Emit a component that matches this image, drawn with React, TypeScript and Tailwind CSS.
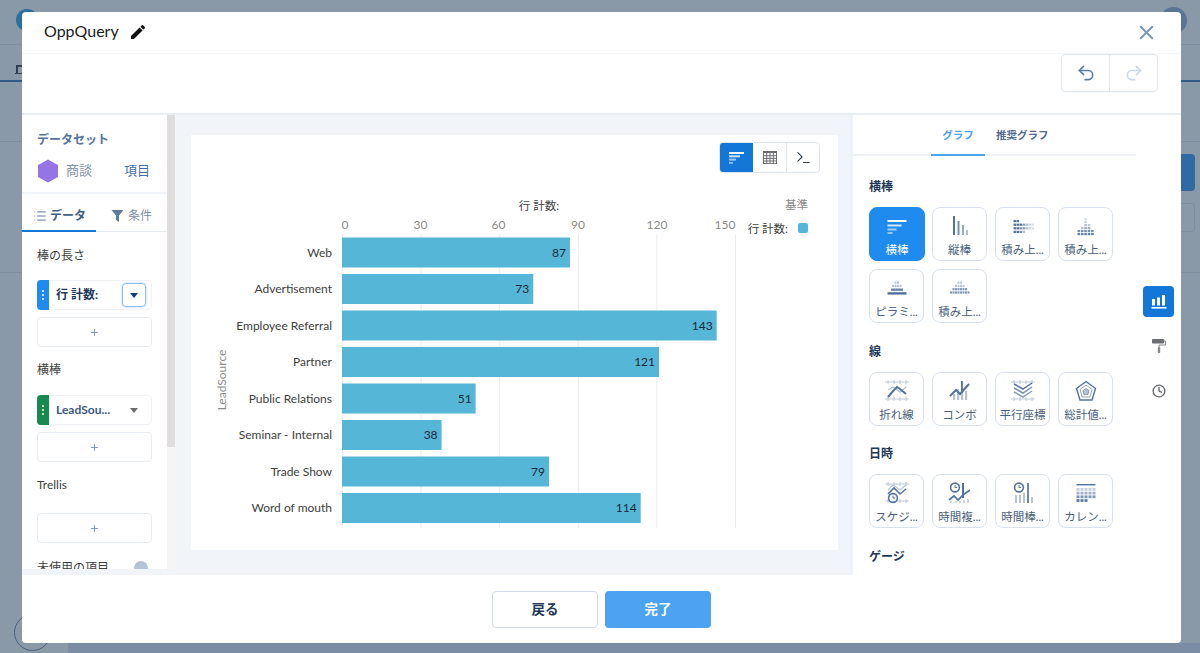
import React from "react";
import { Undo2, Redo2, X, List, Terminal, Clock, Plus } from "lucide-react";

const FONT = { fontFamily: "Lato, 'Noto Sans CJK JP', sans-serif" };
const D = "#54739b";
const L = "#b4c4d6";

const bars = [
  ["Web", 87], ["Advertisement", 73], ["Employee Referral", 143], ["Partner", 121],
  ["Public Relations", 51], ["Seminar - Internal", 38], ["Trade Show", 79], ["Word of mouth", 114],
] as const;

function Box({ children }: { children: React.ReactNode }) {
  return <svg width="24" height="24" viewBox="0 0 24 24" className="shrink-0">{children}</svg>;
}
function Plusses() {
  const out = [];
  for (const y of [3, 20]) for (let x = 3; x <= 21; x += 6)
    out.push(<path key={`${x}-${y}`} d={`M${x} ${y - 2}v4M${x - 3} ${y}h6`} stroke={L} strokeWidth="0.9" fill="none" />);
  return <>{out}</>;
}
function Cells({ rows, horizontal }: { rows: number[][]; horizontal: boolean }) {
  const out = [];
  for (let r = 0; r < rows.length; r++) for (let c = 0; c < rows[r].length; c++) {
    const x = horizontal ? 2.5 + c * 3 : 3.5 + r * 3.4;
    const y = horizontal ? 6 + r * 3.6 : 19 - c * 3;
    out.push(<rect key={`${r}-${c}`} x={x} y={y} width={2.6} height={2.2} fill={D} opacity={rows[r][c]} />);
  }
  return <>{out}</>;
}
function Pyramid({ pale }: { pale: boolean }) {
  const rows = pale ? [2, 4, 6, 8] : [2, 4];
  const out = [];
  rows.forEach((n, r) => {
    for (let i = 0; i < n; i++)
      out.push(<rect key={`${r}-${i}`} x={12 - n * 1.25 + i * 2.5} y={5.5 + r * 3.3} width="2" height="2.2" fill={D} opacity={pale ? (r > 1 ? 0.75 : 0.4) : 0.45} />);
  });
  return (
    <Box>
      {out}
      {!pale && <rect x="6" y="12.5" width="12" height="2.4" fill={D} opacity="0.85" />}
      {!pale && <rect x="2.5" y="16.2" width="19" height="2.4" fill={D} />}
    </Box>
  );
}
const ClockMini = ({ x, y }: { x: number; y: number }) => (
  <g fill="none" stroke={D} strokeWidth="1.6">
    <circle cx={x} cy={y} r="4.4" fill="#fff" />
    <path d={`M${x} ${y - 2.4}v2.4h2.2`} strokeWidth="1" />
  </g>
);
const icons: Record<string, React.ReactNode> = {
  hbar: (
    <Box>
      <rect x="2.5" y="6" width="19" height="2" fill="#fff" />
      <rect x="2.5" y="10.5" width="14" height="2" fill="#fff" opacity="0.8" />
      <rect x="2.5" y="14.5" width="9" height="2" fill="#fff" opacity="0.6" />
      <rect x="2.5" y="18" width="5" height="2" fill="#fff" opacity="0.5" />
    </Box>
  ),
  vbar: (
    <Box>
      <rect x="5" y="2" width="2" height="19" fill={D} />
      <rect x="9.5" y="7" width="2" height="14" fill={D} opacity="0.8" />
      <rect x="14" y="11" width="2" height="10" fill={D} opacity="0.6" />
      <rect x="18" y="16" width="2" height="5" fill={D} opacity="0.45" />
    </Box>
  ),
  stackH: <Box><Cells horizontal rows={[[1, 1], [1, 1, 1, 0.7, 0.45, 0.3, 0.2], [1, 1, 0.8, 0.7, 0.45, 0.3, 0.2], [1, 1, 0.8, 0.45]]} /></Box>,
  stackV: <Box><Cells horizontal={false} rows={[[0.9, 0.8], [0.9, 0.8, 0.45], [0.9, 0.8, 0.6, 0.45, 0.3, 0.2], [0.9, 0.8, 0.6, 0.4], [0.9, 0.8]]} /></Box>,
  pyr: <Pyramid pale={false} />,
  pyrD: <Pyramid pale />,
  line: (
    <Box>
      <Plusses />
      <path d="M3 11 L8 8 L15 13 L21 8" stroke={L} strokeWidth="1.4" fill="none" />
      <path d="M3 18 L9 11 L12 8 L15 10 L21 15" stroke={D} strokeWidth="2" fill="none" />
    </Box>
  ),
  combo: (
    <Box>
      <rect x="5" y="15" width="2.2" height="6" fill={L} />
      <rect x="9" y="10" width="2.2" height="11" fill={L} />
      <rect x="13" y="3" width="2.2" height="18" fill={L} />
      <rect x="17" y="12" width="2.2" height="9" fill={L} />
      <rect x="13" y="2" width="1.8" height="12" fill={D} />
      <path d="M2 17 L8 11 L12 15 L21 5" stroke={D} strokeWidth="2" fill="none" />
    </Box>
  ),
  para: (
    <Box>
      <Plusses />
      <path d="M3 5 L12 10 L21 4" stroke={D} strokeWidth="1.5" fill="none" />
      <path d="M3 9 L12 14 L21 8" stroke={D} strokeWidth="1.5" fill="none" opacity="0.8" />
      <path d="M3 13 L12 18 L21 12" stroke={D} strokeWidth="1.5" fill="none" opacity="0.7" />
    </Box>
  ),
  radar: (
    <Box>
      <path d="M12 2.5 L21.5 9.5 L18 21 L6 21 L2.5 9.5 Z" stroke={D} strokeWidth="1.4" fill="none" />
      <path d="M12 6 L18 10.5 L16 18 L8 18 L6 10.5 Z" stroke={D} strokeWidth="0.9" fill="none" opacity="0.7" />
      <path d="M12 9.5 L15 11.5 L14 15.5 L10 15.5 L9 11.5 Z" fill={L} stroke={D} strokeWidth="0.6" />
    </Box>
  ),
  sched: (
    <Box>
      <Plusses />
      <path d="M3 9 L8 4 L15 9 L21 4" stroke={L} strokeWidth="1.3" fill="none" />
      <path d="M3 13 L9 7 L15 13 L21 8" stroke={D} strokeWidth="1.6" fill="none" />
      <ClockMini x={8} y={17} />
    </Box>
  ),
  timeC: (
    <Box>
      <rect x="14" y="2" width="2" height="15" fill={D} />
      <ClockMini x={7} y={6.5} />
      <path d="M1 19 L6 15 L10 19 L15 14 L22 9" stroke={D} strokeWidth="1.7" fill="none" />
      <path d="M3 20v2M8 20v2M12 20v2M16 19v3M20 18v4" stroke={L} strokeWidth="1.5" />
    </Box>
  ),
  timeB: (
    <Box>
      <ClockMini x={8} y={6.5} />
      <rect x="4" y="14" width="2" height="8" fill={L} />
      <rect x="8" y="14" width="2" height="8" fill={L} />
      <rect x="12" y="12" width="2" height="10" fill={L} />
      <rect x="16" y="2" width="2" height="20" fill={D} opacity="0.85" />
      <rect x="20" y="16" width="2" height="6" fill={L} />
    </Box>
  ),
  cal: (
    <Box>
      <rect x="2.5" y="3" width="19" height="1.4" fill={D} />
      {[0, 1, 2, 3].map((r) =>
        [0, 1, 2, 3, 4].map((c) =>
          r === 3 && c > 2 ? null : (
            <rect key={`${r}-${c}`} x={2.5 + c * 4} y={7 + r * 3.7} width="3" height="2.8" fill={D} opacity={r === 0 && c < 2 ? 0.35 : 0.35 + r * 0.2} />
          ),
        ),
      )}
    </Box>
  ),
};

function Tile({ icon, label, active }: { icon: string; label: string; active?: boolean }) {
  return (
    <div className={active
      ? "w-[56px] h-[54px] rounded-lg bg-[#1f8bee] border border-[#1f8bee] flex flex-col items-center pt-[6px] text-white"
      : "w-[55px] h-[54px] rounded-lg bg-white border border-[#d8e1ee] flex flex-col items-center pt-[6px] text-[#4a5f7a]"}>
      {icons[icon]}
      <span className="text-[11.5px] leading-[16px] mt-[4px] whitespace-nowrap">{label}</span>
    </div>
  );
}
function TileRow({ children }: { children: React.ReactNode }) {
  return <div className="flex gap-[8px]">{children}</div>;
}
function Label({ children, className }: { children: React.ReactNode; className: string }) {
  return <div className={`text-[12px] leading-[16px] font-bold text-[#1f3857] ${className}`}>{children}</div>;
}
function Dots() {
  return (
    <span className="flex flex-col gap-[2px] items-center">
      <span className="w-[2px] h-[2px] bg-white rounded-full" />
      <span className="w-[2px] h-[2px] bg-white rounded-full" />
      <span className="w-[2px] h-[2px] bg-white rounded-full" />
    </span>
  );
}
function AddBox() {
  return (
    <div className="h-[30px] w-[115px] rounded border border-[#e8edf4] flex items-center justify-center text-[#5b7ea6]">
      <Plus size={11} strokeWidth={1.6} />
    </div>
  );
}

function Background() {
  return (
    <div className="h-[653px] bg-[#8a99a8] flex flex-col overflow-hidden">
      <div className="h-[45px] shrink-0 border-b border-[#7e8e9e] flex items-start pl-[14px] pr-[13px] pt-[7px]">
        <svg width="28" height="24" viewBox="0 0 28 24" className="ml-[-1px] mt-[1px]">
          <circle cx="14" cy="12" r="11" fill="#2a6f9f" />
        </svg>
        <div className="ml-auto w-[27px] h-[27px] rounded-full bg-[#5a7593]" />
      </div>
      <div className="h-[37px] shrink-0 flex items-end justify-between">
        <div className="w-[22px] h-full flex items-end border-b-2 border-[#33598a]">
          <svg width="7" height="10" viewBox="0 0 7 10" className="ml-[15px] mb-[6px]">
            <path d="M0 10h7M2 10V2h5" stroke="#2f3f55" strokeWidth="2" fill="none" />
          </svg>
        </div>
        <div className="w-[19px] h-[2px] bg-[#33598a]" />
      </div>
      <div className="h-[60px] shrink-0 border-b border-[#7e8e9e]" />
      <div className="flex justify-end pt-[12px]">
        <div className="w-[14px] h-[37px] bg-[#306aa3] rounded-r mr-[5px]" />
      </div>
      <div className="flex justify-end pt-[12px]">
        <div className="w-[14px] h-[29px] border border-[#7e8e9e] border-l-0 rounded-r mr-[5px]" />
      </div>
      <div className="mt-[40px] border-b border-[#7e8e9e]" />
      <div className="mt-auto h-[41px] flex items-end pl-[14px]">
        <div className="w-[37px] h-[37px] shrink-0 rounded-full border border-[#47617f] mb-[2px]" />
        <div className="ml-[17px] flex-1 h-[10px] bg-[#7a8da4]" />
      </div>
    </div>
  );
}

function Chart() {
  const sx = (v: number) => 342 + v * 2.62;
  return (
    <svg viewBox="191 173 647 377" width="647" height="377" className="block" style={FONT}>
      <text x="539" y="210" textAnchor="middle" fontSize="11.5" fill="#3e3e3c">行 計数:</text>
      {[30, 60, 90, 120, 150].map((v) => (
        <line key={v} x1={sx(v) + 0.5} x2={sx(v) + 0.5} y1="234" y2="528" stroke="#e9edf3" />
      ))}
      <line x1="342.5" x2="342.5" y1="234" y2="528" stroke="#e9edf3" />
      {[[0, 345], [30, 420.5], [60, 498.5], [90, 578], [120, 657], [150, 725]].map(([v, x]) => (
        <text key={v} x={x} y="229" textAnchor="middle" fontSize="12" fill="#8a8a88">{v}</text>
      ))}
      {bars.map(([name, v], i) => {
        const y = 237.5 + i * 36.5;
        return (
          <g key={name}>
            <rect x="342" y={y} width={v * 2.62} height="30" fill="#55b6d7" />
            <text x="332" y={y + 19} textAnchor="end" fontSize="12" fill="#3e3e3c">{name}</text>
            <text x={342 + v * 2.62 - 4} y={y + 19} textAnchor="end" fontSize="12" fill="#1b2a3a">{v}</text>
          </g>
        );
      })}
      <text transform="translate(226 380) rotate(-90)" textAnchor="middle" fontSize="12" fill="#8a8a88">LeadSource</text>
      <text x="808" y="209" textAnchor="end" fontSize="11.5" fill="#8a8a88">基準</text>
      <text x="788" y="233" textAnchor="end" fontSize="11.5" fill="#3e3e3c">行 計数:</text>
      <rect x="798" y="223" width="10" height="10" rx="2" fill="#55b6d7" />
    </svg>
  );
}

function LeftPanel() {
  return (
    <div className="w-[145px] h-[454px] shrink-0 overflow-hidden bg-white">
      <div className="h-[79px] border-b-2 border-[#f1f4f9] px-[15px] pt-[17px]">
        <div className="text-[12px] leading-[16px] font-bold text-[#54739b]">データセット</div>
        <div className="flex items-center mt-[11px]">
          <svg width="20" height="24" viewBox="0 0 20 24" className="ml-[1px]">
            <path d="M10 0.5 L20 6 L20 18 L10 23.5 L0 18 L0 6 Z" fill="#9575e5" />
          </svg>
          <span className="ml-[8px] text-[13px] text-[#7f8fa4]">商談</span>
          <span className="ml-auto mr-[2px] text-[13px] text-[#3f6ea6]">項目</span>
        </div>
      </div>
      <div className="flex h-[38px] border-b border-[#e4e9f0]">
        <div className="w-[74px] border-b-[2px] border-[#1277d6] -mb-[1px] pt-[7px] flex items-center pl-[11px] text-[12px] font-bold text-[#3f5f85]">
          <List size={14} strokeWidth={1.6} className="text-[#54739b] mr-[3px]" />データ
        </div>
        <div className="flex items-center pt-[6px] pl-[15px] text-[12px] text-[#7f8fa4]">
          <svg width="13" height="13" viewBox="0 0 13 13" className="mr-[4px]"><path d="M0.5 1h12L8 6.5V13L5 11V6.5Z" fill="#5f7a9a" /></svg>条件
        </div>
      </div>
      <div className="px-[15px]">
        <div className="text-[12px] leading-[16px] text-[#3e3e3c] mt-[16px]">棒の長さ</div>
        <div className="h-[30px] w-[115px] mt-[16px] rounded border border-[#eef1f6] flex items-center">
          <div className="w-[12px] h-[30px] bg-[#1f8bee] rounded-l flex items-center justify-center -ml-[1px]"><Dots /></div>
          <span className="ml-[7px] text-[12px] font-bold text-[#1f3857]">行 計数:</span>
          <div className="ml-auto mr-[5px] w-[24px] h-[24px] rounded border border-[#8fbdf0] flex items-center justify-center shadow-[0_0_2px_#8fbdf0]">
            <svg width="8" height="5" viewBox="0 0 8 5"><path d="M0 0h8L4 5Z" fill="#0b3f80" /></svg>
          </div>
        </div>
        <div className="mt-[7px]"><AddBox /></div>
        <div className="text-[12px] leading-[16px] text-[#3e3e3c] mt-[15px]">横棒</div>
        <div className="h-[30px] w-[115px] mt-[17px] rounded border border-[#eef1f6] flex items-center">
          <div className="w-[12px] h-[30px] bg-[#168a4f] rounded-l flex items-center justify-center -ml-[1px]"><Dots /></div>
          <span className="ml-[7px] text-[12px] font-bold text-[#3a5a80] whitespace-nowrap">LeadSou...</span>
          <svg width="8" height="5" viewBox="0 0 8 5" className="ml-auto mr-[13px]"><path d="M0 0h8L4 5Z" fill="#6b6d70" /></svg>
        </div>
        <div className="mt-[7px]"><AddBox /></div>
        <div className="text-[12px] leading-[16px] text-[#3e3e3c] mt-[15px]">Trellis</div>
        <div className="mt-[20px]"><AddBox /></div>
        <div className="flex items-center mt-[17px] text-[12px] leading-[16px] text-[#3e3e3c]">
          未使用の項目
          <span className="ml-auto mr-[4px] w-[14px] h-[14px] rounded-full bg-[#b4c4d6]" />
        </div>
      </div>
    </div>
  );
}

function RightPanel() {
  return (
    <div className="w-[331px] shrink-0 flex bg-white border-l-[3px] border-[#eef3f9] overflow-hidden">
      <div className="w-[283px] shrink-0">
        <div className="h-[41px] border-b-2 border-[#eef1f6] flex pl-[78px] text-[10.5px] font-bold">
          <div className="w-[54px] h-[41px] pt-[3px] border-b-2 border-[#4ba3f2] text-[#4ba3f2] flex items-center justify-center">グラフ</div>
          <div className="ml-[11px] pt-[3px] flex items-center text-[#54698d]">推奨グラフ</div>
        </div>
        <div className="pl-[16px]">
          <Label className="mt-[23px] mb-[12px]">横棒</Label>
          <div className="flex flex-col gap-[8px]">
            <TileRow>
              <div className="-mr-[1px]"><Tile icon="hbar" label="横棒" active /></div>
              <Tile icon="vbar" label="縦棒" />
              <Tile icon="stackH" label="積み上..." />
              <Tile icon="stackV" label="積み上..." />
            </TileRow>
            <TileRow>
              <Tile icon="pyr" label="ピラミ..." />
              <Tile icon="pyrD" label="積み上..." />
            </TileRow>
          </div>
          <Label className="mt-[21px] mb-[12px]">線</Label>
          <TileRow>
            <Tile icon="line" label="折れ線" />
            <Tile icon="combo" label="コンボ" />
            <Tile icon="para" label="平行座標" />
            <Tile icon="radar" label="総計値..." />
          </TileRow>
          <Label className="mt-[20px] mb-[12px]">日時</Label>
          <TileRow>
            <Tile icon="sched" label="スケジ..." />
            <Tile icon="timeC" label="時間複..." />
            <Tile icon="timeB" label="時間棒..." />
            <Tile icon="cal" label="カレン..." />
          </TileRow>
          <Label className="mt-[21px]">ゲージ</Label>
        </div>
      </div>
      <div className="pl-[7px] pt-[171px] flex flex-col items-center w-[38px]">
        <div className="w-[31px] h-[31px] rounded bg-[#1277d6] flex items-center justify-center">
          <svg width="16" height="15" viewBox="0 0 16 15">
            <rect x="1" y="5" width="3" height="6.5" fill="#fff" /><rect x="6" y="3.5" width="3" height="8" fill="#fff" />
            <rect x="11" y="1" width="3" height="10.5" fill="#fff" /><rect x="0.5" y="13" width="15" height="1.6" fill="#fff" />
          </svg>
        </div>
        <svg width="16" height="16" viewBox="0 0 16 16" className="mt-[21px]">
          <rect x="1" y="1" width="12" height="4.5" rx="0.8" fill="#6b6d70" />
          <path d="M13 3h1.5v4H8v2" stroke="#8a8a88" strokeWidth="1" fill="none" />
          <rect x="6.8" y="9" width="2.4" height="6" rx="0.8" fill="#8a8a88" />
        </svg>
        <Clock size={14} strokeWidth={2.4} className="text-[#6b6d70] mt-[30px]" />
      </div>
    </div>
  );
}

export default function App() {
  return (
    <div className="relative h-[653px] overflow-hidden" style={FONT}>
      <Background />
      <div className="absolute left-[22px] top-[12px] w-[1159px] h-[631px] bg-white rounded-[4px] flex flex-col overflow-hidden">
        <div className="h-[42px] shrink-0 border-b border-[#f3f5f8] flex items-center pl-[22px] pr-[23px]">
          <span className="text-[16px] text-[#1b1b1b] pb-[3px]">OppQuery</span>
          <svg width="14" height="14" viewBox="3 3 18 18" className="ml-[12px] mb-[2px]">
            <path d="M3 17.25V21h3.75L17.81 9.94l-3.75-3.75L3 17.25zM20.71 7.04a1 1 0 000-1.41l-2.34-2.34a1 1 0 00-1.41 0l-1.83 1.83 3.75 3.75 1.83-1.83z" fill="#111" />
          </svg>
          <X size={23} strokeWidth={2.2} className="ml-auto text-[#7f99b5]" />
        </div>
        <div className="h-[61px] shrink-0 border-b-2 border-[#e9eef5] flex justify-end pr-[23px]">
          <div className="h-[38px] w-[97px] border border-[#dfe6ef] rounded flex">
            <div className="w-[48px] border-r border-[#dfe6ef] flex items-center justify-center">
              <Undo2 size={20} strokeWidth={2} className="text-[#5d7ea0]" />
            </div>
            <div className="flex-1 flex items-center justify-center">
              <Redo2 size={20} strokeWidth={2} className="text-[#cdd8e4]" />
            </div>
          </div>
        </div>
        <div className="h-[460px] shrink-0 flex bg-[#f1f4f9]">
          <LeftPanel />
          <div className="w-[8px] h-[454px] shrink-0 bg-[#f5f5f5] flex flex-col">
            <div className="h-[332px] bg-[#e0dedc]" />
          </div>
          <div className="flex-1 pl-[16px] pt-[20px]">
            <div className="w-[647px] h-[415px] bg-white">
              <div className="flex justify-end pt-[7px] pr-[18px]">
                <div className="h-[31px] w-[101px] flex rounded border border-[#dfe6ef] overflow-hidden">
                  <div className="w-[33px] bg-[#1277d6] flex items-center justify-center">
                    <svg width="16" height="12" viewBox="0 0 16 12">
                      <rect width="15" height="2" fill="#fff" /><rect y="3.3" width="11" height="2" fill="#fff" opacity=".8" />
                      <rect y="6.6" width="7" height="2" fill="#fff" opacity=".6" /><rect y="9.9" width="4" height="2" fill="#fff" opacity=".5" />
                    </svg>
                  </div>
                  <div className="w-[34px] border-r border-[#dfe6ef] flex items-center justify-center">
                    <svg width="14" height="13" viewBox="0 0 14 13">
                      <rect width="14" height="2" fill="#6b6d70" />
                      <path d="M0.5 2v11M3.7 2v11M7 2v11M10.3 2v11M13.5 2v11M0 4.7h14M0 7.4h14M0 10h14M0 12.6h14" stroke="#6b6d70" strokeWidth="1" />
                    </svg>
                  </div>
                  <div className="flex-1 flex items-center justify-center">
                    <Terminal size={17} strokeWidth={1.6} className="text-[#2b3a4d]" />
                  </div>
                </div>
              </div>
              <Chart />
            </div>
          </div>
          <RightPanel />
        </div>
        <div className="flex-1 flex items-center justify-center gap-[7px]">
          <button className="w-[106px] h-[37px] rounded border border-[#d3dbe6] bg-white text-[13.5px] font-bold text-[#1f3857]">戻る</button>
          <button className="w-[106px] h-[37px] rounded bg-[#4ba3f2] text-[13.5px] font-bold text-white">完了</button>
        </div>
      </div>
    </div>
  );
}
